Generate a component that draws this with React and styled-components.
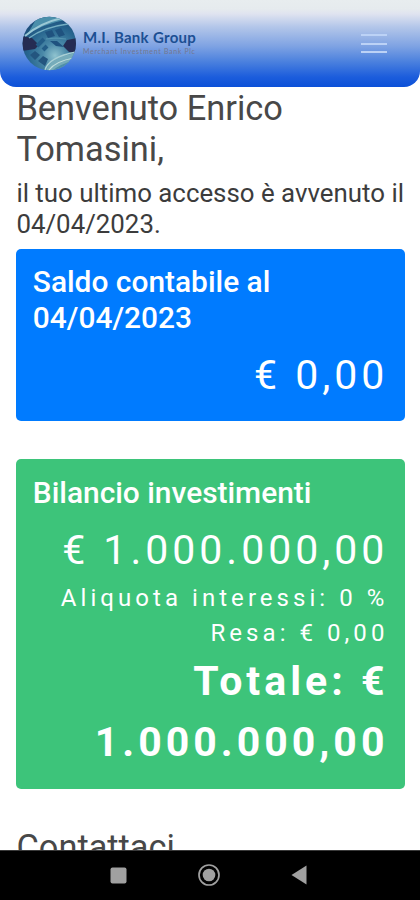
import React from 'react';
import styled, {createGlobalStyle} from 'styled-components'


const GlobalStyle = createGlobalStyle`
* {
    box-sizing: border-box;
}

body {
    margin: 0;
    background: #fff;
    font-family: Roboto, "Liberation Sans", sans-serif;
    color: #3c3c3c;
}

h2, h4, p {
    margin: 0;
}
`;

const Screen = styled.div`
display: flex;
flex-direction: column;
width: 420px;
height: 900px;
overflow: hidden;
`;

const Nav = styled.nav`
display: flex;
flex: none;
justify-content: space-between;
align-items: center;
height: 87px;
padding: 0 33px 0 22px;
border-radius: 0 0 16px 16px;
background: linear-gradient(180deg, #e8edef 0, #e6ebee 9px, #dfe3f0 14px, #b3c6e9 27px, #7fa3e3 46px, #4a80de 62px, #1c5ddc 77px, #0b50d8 87px);
`;

const NavLogo = styled.a`
display: flex;
align-items: center;
gap: 6px;
`;

const LogoText = styled.div`
display: flex;
flex-direction: column;
padding-bottom: 3px;
white-space: nowrap;
`;

const LogoName = styled.span`
color: #1c4f93;
font-family: Lato, sans-serif;
font-weight: 700;
font-size: 15px;
line-height: 17px;
letter-spacing: 0.3px;
`;

const LogoTagline = styled.span`
color: #74778f;
font-family: Lato, sans-serif;
font-size: 7px;
line-height: 10px;
letter-spacing: 0.67px;
`;

const MobileIcon = styled.button`
display: flex;
flex-direction: column;
gap: 6.5px;
width: 26px;
padding: 0;
border: 0;
background: none;
`;

const Bar = styled.span`
height: 2px;
background: #bcd2f6;
`;

const Content = styled.main`
flex: 1;
min-height: 0;
padding: 1px 15px 0 16.4px;
overflow: hidden;
`;

const Heading = styled.h2`
font-weight: 400;
font-size: 34.4px;
line-height: 41px;
color: #484848;
`;

const LastAccess = styled.p`
margin: 8px 0 9px;
font-size: 25.85px;
line-height: 31px;
white-space: nowrap;
`;

const Card = styled.section`
margin-bottom: 38px;
padding: ${({ $tall }) => ($tall ? '16px 16.4px' : '15px 16.4px')};
border-radius: 5px;
background: ${({ color }) => color};
color: #fff;
`;

const CardTitle = styled.h4`
margin-bottom: 9px;
font-weight: 500;
font-size: 29.9px;
line-height: 36px;
`;

const Amount = styled.p`
margin-right: 0.2px;
font-size: 41px;
font-weight: ${({ $bold }) => ($bold ? 700 : 400)};
line-height: 61px;
letter-spacing: 4px;
text-align: right;
`;

const Detail = styled.p`
margin-right: 0.2px;
font-size: 24px;
line-height: 35px;
letter-spacing: 4.05px;
text-align: right;
white-space: nowrap;
`;

const SystemBar = styled.footer`
display: flex;
flex: none;
justify-content: center;
align-items: center;
gap: 71px;
height: 50px;
padding: 0 3px 1px 0;
border-top: 1px solid #3a3a3a;
background: #000;
`;

const Globe = () => (
    <svg width="55" height="55" viewBox="0 0 55 55">
        <defs>
            <clipPath id="disc"><circle cx="27.3" cy="27.5" r="26.7" /></clipPath>
            <radialGradient id="glow" cx="0.6" cy="0.72" r="0.75">
                <stop offset="0" stopColor="#8fc3cf" />
                <stop offset="0.3" stopColor="#4a89a8" />
                <stop offset="0.65" stopColor="#28668f" />
                <stop offset="1" stopColor="#1b4a78" />
            </radialGradient>
        </defs>
        <g clipPath="url(#disc)">
            <rect width="55" height="55" fill="url(#glow)" />
            <path d="M0 20L10 22L17 29L13 33L0 35Z" fill="#252c53" />
            <path d="M45 24L55 22V37L47 36L41 30Z" fill="#252c53" />
            <path d="M5 19Q21 8 43 4L32 0H16Z" fill="#4b8fab" />
            <path d="M3 20Q18 7 40 2" fill="none" stroke="#9bc8d5" strokeWidth="2" />
            <path d="M7 22Q22 11 46 8" fill="none" stroke="#74aec2" strokeWidth="1.4" />
            <path d="M23 16L30 14L33 20L26 22ZM33 14L39 12L43 19L37 21ZM28 25L35 25L42 31L34 30Z" fill="#1f527f" />
            <path d="M24 23L34 22L44 23" fill="none" stroke="#5796b1" strokeWidth="1.2" />
            <path d="M15 30L22 23M21 34L25 30" stroke="#235d88" strokeWidth="4" />
            <path d="M8 39L13 35L18 39L13 44ZM16 45L21 40L26 43L23 50Z" fill="#23557f" />
            <path d="M24 55Q27 42 53 37V55Z" fill="#76acba" />
            <path d="M23 54Q27 41 54 36" fill="none" stroke="#a9d0d5" strokeWidth="1.4" />
            <path d="M27 54Q34 45 52 42" fill="none" stroke="#c0dedd" strokeWidth="1.2" />
            <path d="M30 55Q38 48 53 44V55Z" fill="#4d8ea8" />
        </g>
    </svg>
)

const Navbar = () => {
    return (
        <Nav>
            <NavLogo>
                <Globe />
                <LogoText>
                    <LogoName>M.I. Bank Group</LogoName>
                    <LogoTagline>Merchant Investment Bank Plc</LogoTagline>
                </LogoText>
            </NavLogo>
            <MobileIcon aria-label="Menu">
                <Bar />
                <Bar />
                <Bar />
            </MobileIcon>
        </Nav>
    )
}

const App = () => {
    return (
        <>
        <GlobalStyle />
        <Screen>
            <Navbar />
            <Content>
                <Heading>Benvenuto Enrico<br />Tomasini,</Heading>
                <LastAccess>il tuo ultimo accesso è avvenuto il<br />04/04/2023.</LastAccess>
                <Card color="#007bff">
                    <CardTitle>Saldo contabile al<br />04/04/2023</CardTitle>
                    <Amount>€ 0,00</Amount>
                </Card>
                <Card color="#3dc47a" $tall>
                    <CardTitle>Bilancio investimenti</CardTitle>
                    <Amount>€ 1.000.000,00</Amount>
                    <Detail>Aliquota interessi: 0 %</Detail>
                    <Detail>Resa: € 0,00</Detail>
                    <Amount $bold>Totale: €<br />1.000.000,00</Amount>
                </Card>
                <Heading>Contattaci</Heading>
            </Content>
            <SystemBar>
                <svg width="17" height="17" viewBox="0 0 17 17">
                    <rect x="0.5" y="0.5" width="16" height="16" rx="2" fill="#a0a0a0" />
                </svg>
                <svg width="22" height="22" viewBox="0 0 22 22">
                    <circle cx="11" cy="11" r="10" fill="none" stroke="#a0a0a0" strokeWidth="1.7" />
                    <circle cx="11" cy="11" r="6.3" fill="#a0a0a0" />
                </svg>
                <svg width="16" height="20" viewBox="0 0 16 20">
                    <path d="M15.5 0.5V19.5L0.5 10Z" fill="#a0a0a0" />
                </svg>
            </SystemBar>
        </Screen>
        </>
    )
}

export default App
